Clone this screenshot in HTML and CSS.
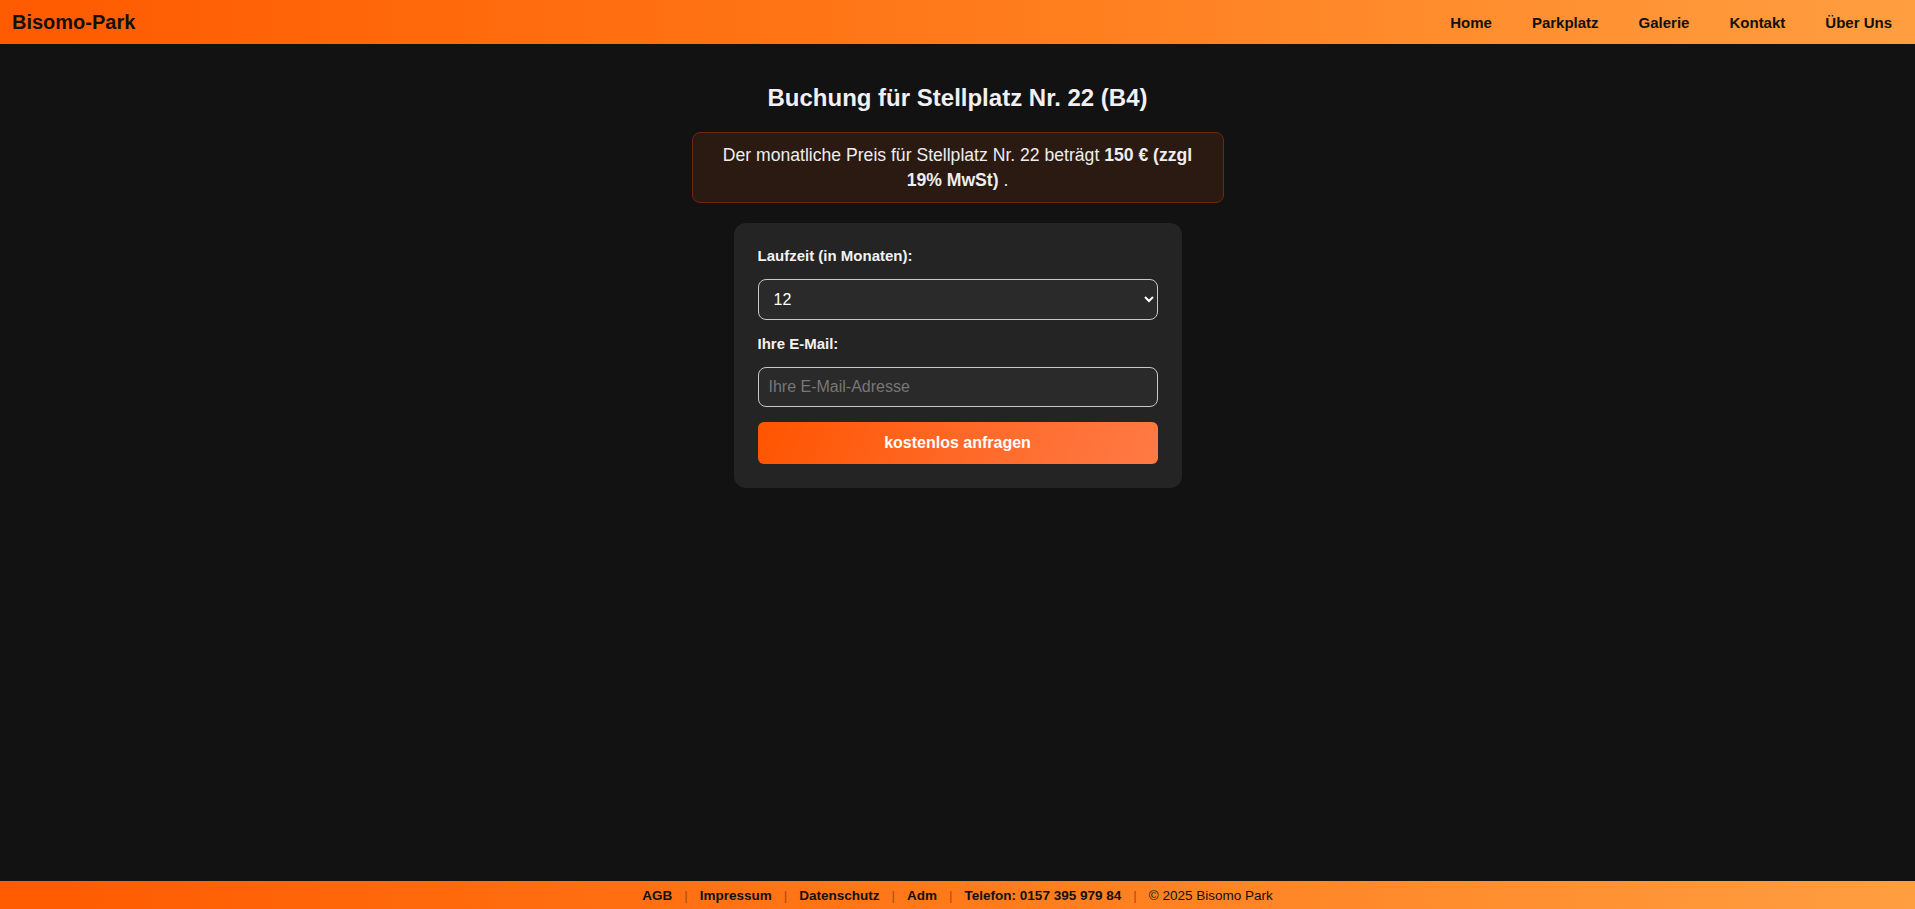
FILE: index.html
```html
<!DOCTYPE html>
<html lang="de">
<head>
	<meta charset="utf-8">
	<title>Bisomo-Park - Buchung</title>
	<link rel="stylesheet" href="styles.css">
</head>
<body>
	<header class="topbar">
		<a class="logo" href="#">Bisomo-Park</a>
		<nav class="menu">
			<a href="#">Home</a>
			<a href="#">Parkplatz</a>
			<a href="#">Galerie</a>
			<a href="#">Kontakt</a>
			<a href="#">Über Uns</a>
		</nav>
	</header>

	<main class="inhalt">
		<h2>Buchung für Stellplatz Nr. 22 (B4)</h2>
		<div class="preisinfo">
			Der monatliche Preis für Stellplatz Nr. 22 beträgt <strong>150 € (zzgl 19% MwSt)</strong> .
		</div>

		<form class="buchung">
			<label for="laufzeit">Laufzeit (in Monaten):</label>
			<select id="laufzeit">
				<option>1</option>
				<option>3</option>
				<option>6</option>
				<option selected>12</option>
				<option>24</option>
			</select>
			<label for="email">Ihre E-Mail:</label>
			<input type="email" id="email" placeholder="Ihre E-Mail-Adresse">
			<button type="button" class="senden">kostenlos anfragen</button>
		</form>
	</main>

	<footer class="fuss">
		<a href="#">AGB</a><span class="trenner">|</span>
		<a href="#">Impressum</a><span class="trenner">|</span>
		<a href="#">Datenschutz</a><span class="trenner">|</span>
		<a href="#">Adm</a><span class="trenner">|</span>
		<a href="#">Telefon: 0157 395 979 84</a><span class="trenner">|</span>
		<span>© 2025 Bisomo Park</span>
	</footer>
</body>
</html>
```

FILE: styles.css
```css
* { box-sizing: border-box; }

body {
	margin: 0;
	min-height: 100vh;
	display: flex;
	flex-direction: column;
	background-color: #121212;
	color: #eee;
	font-family: "Liberation Sans", Arial, sans-serif;
}

a { text-decoration: none; color: #111; }

/* kopfzeile */
.topbar {
	height: 44px;
	display: flex;
	align-items: center;
	justify-content: space-between;
	padding: 0 23px 0 12px;
	background: linear-gradient(90deg, #ff5a00 0%, #ff7a1a 50%, #ff9e40 100%);
}

.logo {
	font-size: 20px;
	font-weight: bold;
	color: #111;
}

.menu {
	display: flex;
	gap: 40px;
}

.menu a {
	font-size: 15px;
	font-weight: bold;
}

/* inhalt */
.inhalt {
	flex: 1;
	padding: 20px;
	display: flex;
	flex-direction: column;
	align-items: center;
}

.inhalt h2 {
	font-size: 24px;
	margin: 20px 0;
	color: #f0f0f0;
}

.preisinfo {
	max-width: 532px;
	padding: 10px 15px;
	background-color: #2b1a12;
	border: 1px solid #6b2a0c;
	border-radius: 8px;
	text-align: center;
	font-size: 17.6px;
	line-height: 1.4;
	color: #eee;
}

.buchung {
	width: 448px;
	margin-top: 20px;
	padding: 24px;
	background-color: #242424;
	border-radius: 12px;
	display: flex;
	flex-direction: column;
	gap: 15px;
}

.buchung label {
	font-size: 15px;
	font-weight: bold;
	color: #f2f2f2;
}

.buchung select,
.buchung input {
	height: 41px;
	padding: 10px;
	font-size: 16px;
	font-family: inherit;
	color: #fff;
	background-color: #2a2a2a;
	border: 1px solid #c8c8c8;
	border-radius: 8px;
}

.buchung select { padding-left: 11px; }

.buchung input { height: 40px; }

.buchung input::placeholder { color: #777; }

.senden {
	height: 42px;
	border: none;
	border-radius: 6px;
	font-family: inherit;
	font-size: 16px;
	font-weight: bold;
	color: #fff;
	background: linear-gradient(110deg, #ff5500 0%, #ff6a2a 55%, #ff7a45 100%);
	cursor: pointer;
}

/* fusszeile */
.fuss {
	height: 28px;
	display: flex;
	align-items: center;
	justify-content: center;
	font-size: 13.5px;
	color: #111;
	background: linear-gradient(90deg, #ff5a00 0%, #ff7a1a 50%, #ff9e40 100%);
}

.fuss a { font-weight: bold; }

.trenner {
	margin: 0 12px;
	color: #b04a10;
}
```
